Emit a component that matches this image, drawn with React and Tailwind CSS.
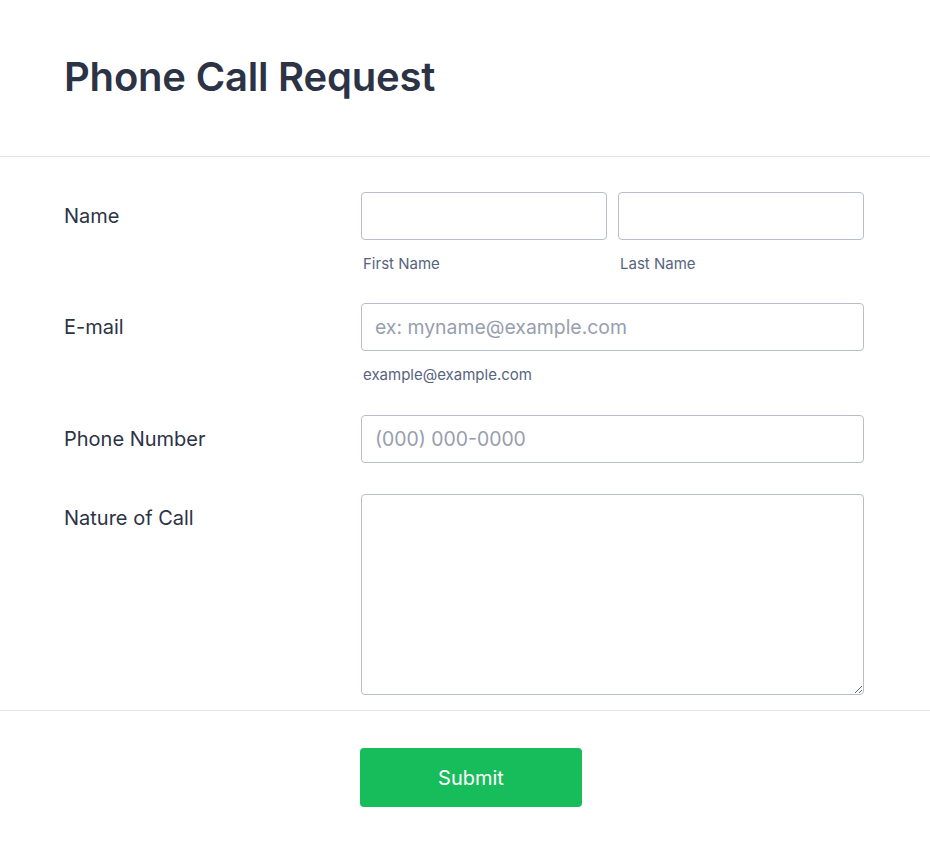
import React from "react";

const font = { fontFamily: "Inter, 'Noto Sans', sans-serif" };

function Label({ children }) {
  return (
    <div className="w-[297px] shrink-0 h-12 flex items-center text-[20px] text-[#2c3345]">
      {children}
    </div>
  );
}

const inputCls =
  "h-12 w-full border border-[#b8bdc9] rounded-[4px] px-[13px] text-[19.4px] text-[#2c3345] placeholder:text-[#979ead] outline-none bg-white";

const subCls = "mt-[14px] leading-5 text-[15px] text-[#57647e] pl-[2px]";

export default function App() {
  return (
    <div className="w-[930px] h-[857px] bg-white" style={font}>
      <div className="px-16 pt-[53px] h-[157px] border-b border-[#e3e5ec]">
        <h1 className="text-[40px] leading-[48px] font-semibold text-[#2c3345] tracking-[-0.2px]">
          Phone Call Request
        </h1>
      </div>
      <div className="px-16 pt-[35px]">
        <div className="flex">
          <Label>Name</Label>
          <div className="w-[503px] flex gap-[11px]">
            <div className="flex-1">
              <input className={inputCls} />
              <div className={subCls}>First Name</div>
            </div>
            <div className="flex-1">
              <input className={inputCls} />
              <div className={subCls}>Last Name</div>
            </div>
          </div>
        </div>
        <div className="flex mt-[29px]">
          <Label>E-mail</Label>
          <div className="w-[503px]">
            <input className={inputCls} placeholder="ex: myname@example.com" />
            <div className={subCls}>example@example.com</div>
          </div>
        </div>
        <div className="flex mt-[30px]">
          <Label>Phone Number</Label>
          <div className="w-[503px]">
            <input className={inputCls} placeholder="(000) 000-0000" />
          </div>
        </div>
        <div className="flex mt-[31px]">
          <Label>Nature of Call</Label>
          <div className="w-[503px]">
            <textarea className="block h-[201px] w-full border border-[#b8bdc9] rounded-[4px] px-[13px] py-2 text-[19px] outline-none bg-white resize-y" />
          </div>
        </div>
      </div>
      <div className="mt-[15px] border-t border-[#e3e5ec] flex justify-center pt-[37px]">
        <button className="ml-[12px] w-[222px] h-[59px] rounded-[4px] bg-[#18bd5b] text-white text-[20px] font-normal">
          Submit
        </button>
      </div>
    </div>
  );
}
